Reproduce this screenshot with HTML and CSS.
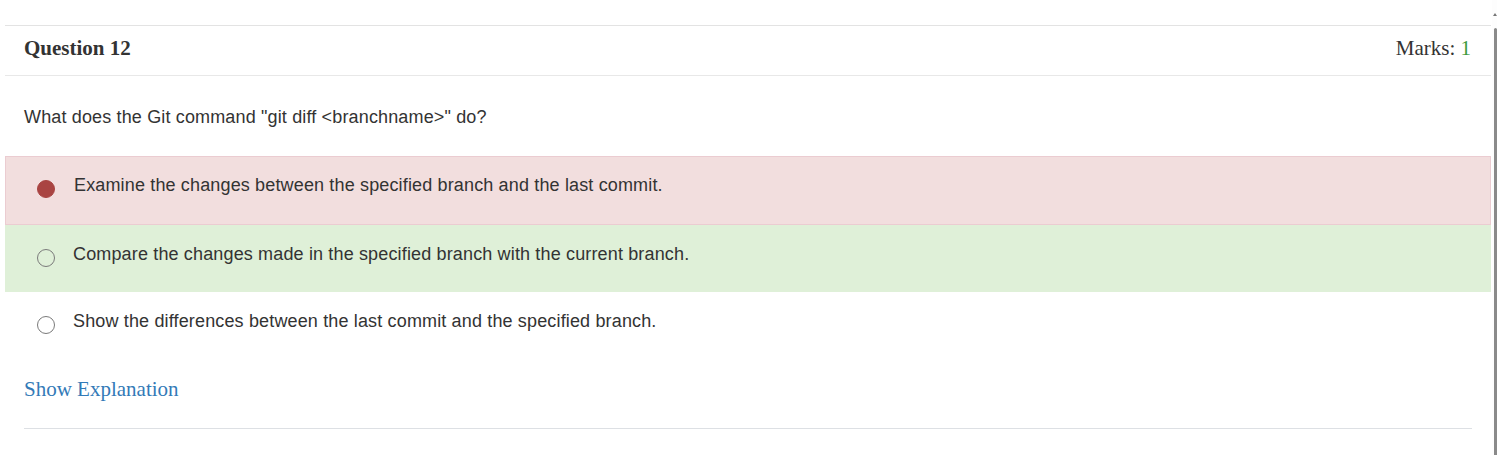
FILE: index.html
```html
<!DOCTYPE html>
<html>
<head>
<meta charset="utf-8">
<link rel="stylesheet" href="styles.css">
</head>
<body>
<div class="card">
  <div class="card-head">
    <h3 class="q-title">Question 12</h3>
    <div class="marks">Marks: <span class="marks-val">1</span></div>
  </div>
  <p class="q-text">What does the Git command "git diff &lt;branchname&gt;" do?</p>
  <div class="options">
    <div class="opt opt-wrong">
      <span class="radio radio-filled"></span>
      <span class="opt-text">Examine the changes between the specified branch and the last commit.</span>
    </div>
    <div class="opt opt-right">
      <span class="radio"></span>
      <span class="opt-text">Compare the changes made in the specified branch with the current branch.</span>
    </div>
    <div class="opt">
      <span class="radio"></span>
      <span class="opt-text">Show the differences between the last commit and the specified branch.</span>
    </div>
  </div>
  <div class="explain"><a class="explain-link" href="#">Show Explanation</a></div>
  <hr class="bottom-rule">
</div>
<div class="scrollbar"><span class="scroll-arrow"></span><span class="scroll-thumb"></span></div>
</body>
</html>
```

FILE: styles.css
```css
html, body { margin: 0; padding: 0; background: #fff; }
body { font-family: "Liberation Sans", Arial, sans-serif; color: #333; }

.card {
  margin: 25px 0 0 5px;
  width: 1486px;
  border-top: 1px solid #e3e3e3;
}
.card-head {
  display: flex;
  justify-content: space-between;
  align-items: center;
  box-sizing: border-box;
  height: 50px;
  padding: 0 20px 5px 19px;
  border-bottom: 1px solid #e8e8e8;
  font-family: "Liberation Serif", "Times New Roman", serif;
}
.q-title { margin: 0; font-size: 21px; font-weight: bold; color: #333; line-height: 24px; }
.marks { font-size: 21px; color: #333; line-height: 24px; }
.marks-val { color: #3c9a3c; }

.q-text {
  margin: 0;
  box-sizing: border-box;
  padding: 31px 19px 0;
  height: 80px;
  font-size: 18px;
  line-height: 20px;
  letter-spacing: 0.15px;
  color: #333;
}

.opt {
  display: flex;
  align-items: flex-start;
  box-sizing: border-box;
  height: 67px;
  padding: 19px 0 0 32px;
  font-size: 18px;
  line-height: 20px;
  letter-spacing: 0.15px;
  color: #333;
}
.opt-wrong {
  background: #f2dede;
  border: 1px solid #ebccd1;
  height: 69px;
  padding: 18px 0 0 31px;
}
.opt-right { background: #dff0d8; }
.radio {
  box-sizing: border-box;
  width: 18px;
  height: 18px;
  border: 1.5px solid #7a7a7a;
  border-radius: 50%;
  margin: 5px 18px 0 0;
  flex: none;
}
.radio-filled {
  background: #a94442;
  border-color: #a94442;
  margin-right: 19px;
}

.explain {
  box-sizing: border-box;
  padding: 18px 19px 0;
  height: 69px;
  font-family: "Liberation Serif", "Times New Roman", serif;
  font-size: 21px;
  line-height: 24px;
}
.explain-link { color: #337ab7; text-decoration: none; }

.bottom-rule {
  margin: 0 19px;
  border: 0;
  border-top: 1px solid #dde0e4;
  height: 0;
}

.scrollbar {
  position: fixed;
  top: 0;
  right: 0;
  width: 5px;
  height: 100%;
  display: flex;
  flex-direction: column;
  align-items: flex-end;
  background: #fdfdfd;
}
.scroll-arrow {
  margin-top: 13px;
  width: 0; height: 0;
  border-left: 2px solid transparent;
  border-right: 2px solid transparent;
  border-bottom: 3px solid #777;
}
.scroll-thumb {
  margin-top: 12px;
  width: 3px;
  flex: 1;
  background: #8a8a8a;
  border-radius: 2px 2px 0 0;
}
```
